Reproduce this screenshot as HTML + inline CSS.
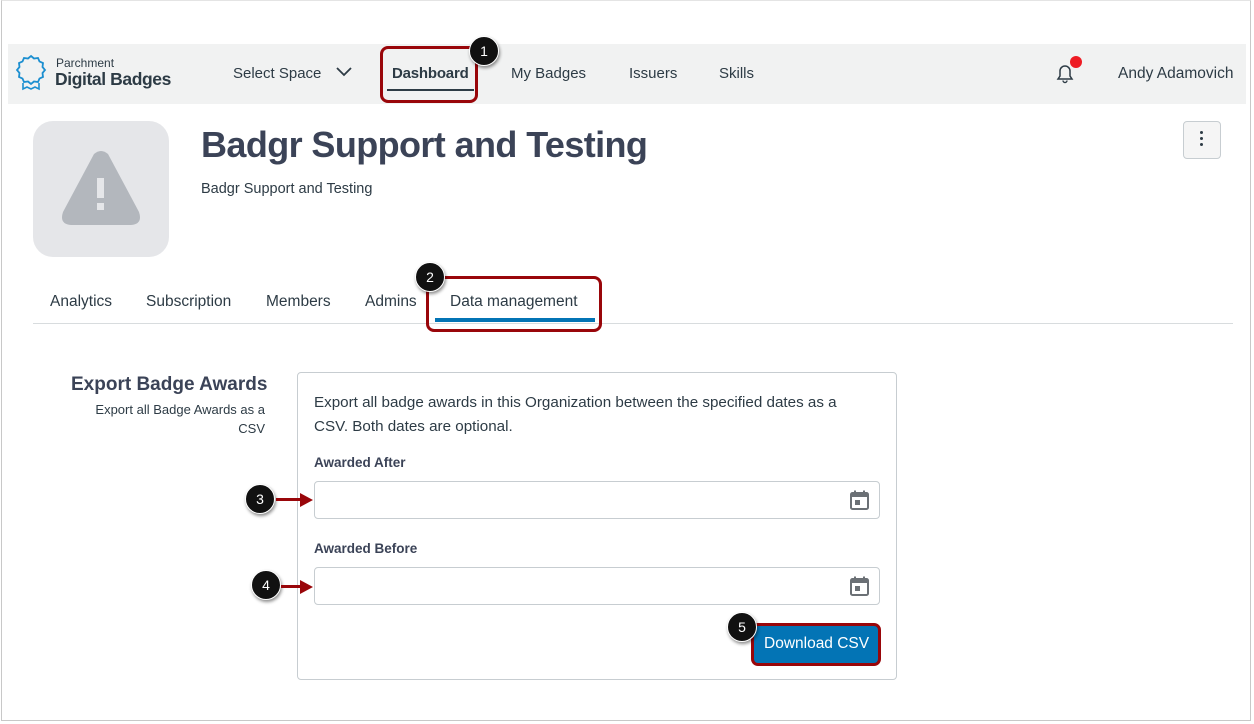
<!DOCTYPE html>
<html><head><meta charset="utf-8"><style>
*{box-sizing:border-box;margin:0;padding:0}
body{width:1254px;height:724px;background:#fff;font-family:"Liberation Sans",sans-serif;color:#2d3b45;position:relative;overflow:hidden}
.a{position:absolute}
.frame{left:1px;top:0;width:1250px;height:721px;border:1px solid #c8c8c8;border-top:1px solid #e4e4e4}
.nav{left:8px;top:44px;width:1238px;height:60px;background:#f1f2f2}
.t{position:absolute;white-space:nowrap}
.circ{position:absolute;width:30px;height:30px;border-radius:50%;background:#111;color:#fff;font-size:14px;text-align:center;line-height:28px;box-shadow:1px 2px 3px rgba(0,0,0,.45);border:1px solid #fff}
.red{position:absolute;border:3px solid #99060a;border-radius:8px}
.inp{position:absolute;left:314px;width:566px;height:38px;border:1px solid #c7cdd1;border-radius:4px;background:#fff}
.arrow{position:absolute;height:3px;background:#99060a}
.ah{position:absolute;width:0;height:0;border-top:7px solid transparent;border-bottom:7px solid transparent;border-left:13px solid #99060a}
</style></head><body>
<div class="a frame"></div>
<div class="a nav"></div>
<svg class="a" style="left:15px;top:54px" width="32" height="38" viewBox="0 0 32 38"><path d="M16 2l3 2.5 4-.5 1.5 3.5 3.5 1.5-.5 4 2.5 3-2.5 3 .5 4-3.5 1.5L23 28l-4-.5L16 30l-3-2.5-4 .5-1.5-3.5L4 23l.5-4L2 16l2.5-3-.5-4 3.5-1.5L9 4l4 .5z" fill="none" stroke="#1c8fd0" stroke-width="1.8"/><path d="M8 29v6l4-2 4 2 4-2 4 2v-6" fill="none" stroke="#1c8fd0" stroke-width="1.6"/></svg>
<div class="t" style="left:56px;top:56px;font-size:12px;color:#2d3b45">Parchment</div>
<div class="t" style="left:55px;top:69px;font-size:17.5px;font-weight:bold;color:#2d3b45;letter-spacing:-.4px">Digital Badges</div>
<div class="t" style="left:233px;top:65px;font-size:15px">Select Space</div>
<svg class="a" style="left:336px;top:67px" width="16" height="10"><path d="M1 1l7 7 7-7" fill="none" stroke="#2d3b45" stroke-width="1.8"/></svg>
<div class="t" style="left:392px;top:65px;font-size:15px;font-weight:bold;letter-spacing:-.2px">Dashboard</div>
<div class="a" style="left:387px;top:89px;width:87px;height:2px;background:#2d3b45"></div>
<div class="red" style="left:380px;top:46px;width:98px;height:57px"></div>
<div class="circ" style="left:469px;top:36px">1</div>
<div class="t" style="left:511px;top:65px;font-size:15px">My Badges</div>
<div class="t" style="left:629px;top:65px;font-size:15px">Issuers</div>
<div class="t" style="left:719px;top:65px;font-size:15px">Skills</div>
<svg class="a" style="left:1053px;top:61px" width="24" height="24" viewBox="0 0 24 24"><path d="M5 18h14l-2-3v-5a5 5 0 0 0-10 0v5z" fill="none" stroke="#2d3b45" stroke-width="1.5"/><path d="M10 19.5a2 2 0 0 0 4 0" fill="none" stroke="#2d3b45" stroke-width="1.4"/></svg>
<div class="a" style="left:1070px;top:56px;width:12px;height:12px;border-radius:50%;background:#ee1c24"></div>
<div class="t" style="left:1118px;top:65px;font-size:15.5px">Andy Adamovich</div>

<div class="a" style="left:33px;top:121px;width:136px;height:136px;border-radius:20px;background:#e5e6e9"></div>
<svg class="a" style="left:60px;top:150px" width="82" height="78" viewBox="0 0 82 78"><path d="M34 4q7-6 14 0l31 58q4 12-8 13H11Q-1 74 3 62z" fill="#b3b7bd"/><rect x="37" y="28" width="7" height="20" fill="#e5e6e9"/><rect x="37" y="53" width="7" height="7" fill="#e5e6e9"/></svg>
<div class="t" style="left:201px;top:124px;font-size:36px;font-weight:bold;color:#3b4357;letter-spacing:-.6px">Badgr Support and Testing</div>
<div class="t" style="left:201px;top:181px;font-size:14.5px">Badgr Support and Testing</div>
<div class="a" style="left:1183px;top:121px;width:38px;height:38px;border:1px solid #c7cdd1;border-radius:4px;background:#f5f5f5"></div>
<div class="a" style="left:1200px;top:131px;width:3px;height:3px;background:#2d3b45;border-radius:50%;box-shadow:0 6px 0 #2d3b45,0 12px 0 #2d3b45"></div>

<div class="t" style="left:50px;top:293px;font-size:15.5px">Analytics</div>
<div class="t" style="left:146px;top:293px;font-size:15.5px">Subscription</div>
<div class="t" style="left:266px;top:293px;font-size:15.5px">Members</div>
<div class="t" style="left:365px;top:293px;font-size:15.5px">Admins</div>
<div class="t" style="left:450px;top:293px;font-size:15.5px">Data management</div>
<div class="a" style="left:33px;top:323px;width:1200px;height:1px;background:#d8dcde"></div>
<div class="a" style="left:435px;top:318px;width:160px;height:4px;background:#0374b5"></div>
<div class="red" style="left:426px;top:276px;width:176px;height:56px"></div>
<div class="circ" style="left:415px;top:262px">2</div>

<div class="t" style="left:71px;top:374px;font-size:19px;font-weight:bold;color:#3b4357">Export Badge Awards</div>
<div class="t" style="right:989px;top:400px;font-size:13px;text-align:right;line-height:19px">Export all Badge Awards as a<br>CSV</div>
<div class="a" style="left:297px;top:372px;width:600px;height:308px;border:1px solid #c7cdd1;border-radius:4px"></div>
<div class="t" style="left:314px;top:391px;font-size:15.2px;line-height:24px">Export all badge awards in this Organization between the specified dates as a<br>CSV. Both dates are optional.</div>
<div class="t" style="left:314px;top:455px;font-size:13.5px;font-weight:bold;color:#3b4357">Awarded After</div>
<div class="inp" style="top:481px"></div>
<div class="t" style="left:314px;top:541px;font-size:13.5px;font-weight:bold;color:#3b4357">Awarded Before</div>
<div class="inp" style="top:567px"></div>
<svg class="a" style="left:849px;top:489px" width="22" height="22" viewBox="0 0 22 22"><rect x="2" y="4" width="17" height="16" rx="1.5" fill="none" stroke="#6b7075" stroke-width="2"/><rect x="2" y="4" width="17" height="4" fill="#6b7075"/><rect x="5" y="1.5" width="2" height="4" fill="#6b7075"/><rect x="14" y="1.5" width="2" height="4" fill="#6b7075"/><rect x="6" y="11" width="5" height="5" fill="#6b7075"/></svg>
<svg class="a" style="left:849px;top:575px" width="22" height="22" viewBox="0 0 22 22"><rect x="2" y="4" width="17" height="16" rx="1.5" fill="none" stroke="#6b7075" stroke-width="2"/><rect x="2" y="4" width="17" height="4" fill="#6b7075"/><rect x="5" y="1.5" width="2" height="4" fill="#6b7075"/><rect x="14" y="1.5" width="2" height="4" fill="#6b7075"/><rect x="6" y="11" width="5" height="5" fill="#6b7075"/></svg>
<div class="circ" style="left:245px;top:484px">3</div>
<div class="arrow" style="left:276px;top:498px;width:30px"></div><div class="ah" style="left:300px;top:493px"></div>
<div class="circ" style="left:251px;top:570px">4</div>
<div class="arrow" style="left:281px;top:585px;width:25px"></div><div class="ah" style="left:300px;top:580px"></div>

<div class="red" style="left:751px;top:623px;width:130px;height:43px;border-radius:7px;background:#0374b5"></div>
<div class="t" style="left:764px;top:635px;font-size:15.5px;color:#fff">Download CSV</div>
<div class="circ" style="left:727px;top:612px">5</div>
</body></html>
